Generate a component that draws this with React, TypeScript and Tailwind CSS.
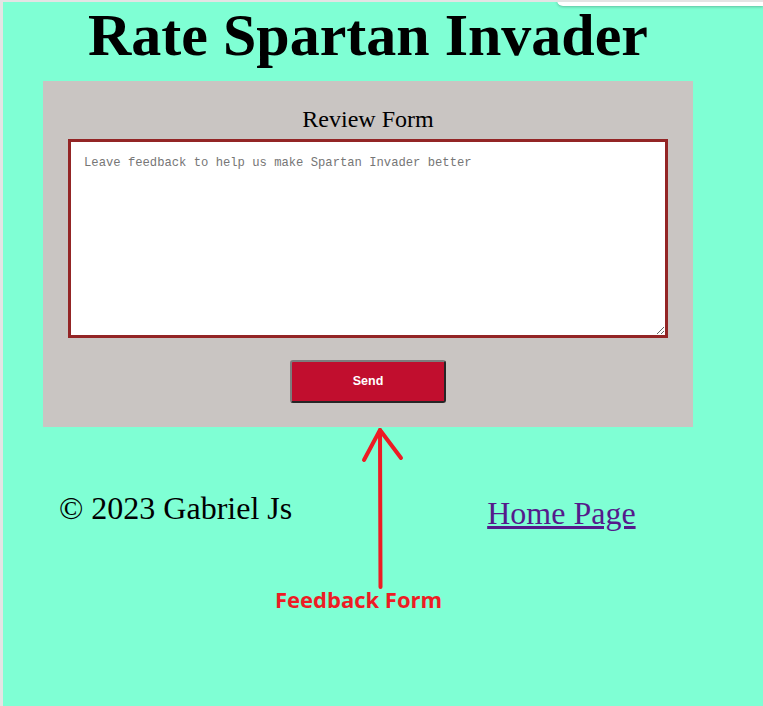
import React from "react";

export default function App() {
  return (
    <div className="relative w-[763px] h-[706px] overflow-hidden bg-[#7fffd4] border-l-[3px] border-t-2 border-[#e4e4e4]">
      <div className="absolute right-0 top-[-2px] w-[206px] h-[6px] bg-white rounded-bl-[6px] shadow-[0_1px_3px_rgba(0,0,0,0.25)]" />
      <div className="w-[730px]">
        <h1 className="text-center text-black font-bold text-[60px] leading-[66px] [font-family:'Liberation_Serif',serif]">
          Rate Spartan Invader
        </h1>
        <div className="mx-10 mt-[13px] h-[346px] bg-[#c9c5c2] flex flex-col items-center pt-[24px]">
          <h2 className="text-[24px] leading-[28px] text-black [font-family:'Liberation_Serif',serif]">
            Review Form
          </h2>
          <textarea
            className="mt-[6px] w-[600px] h-[199px] shrink-0 bg-white border-[3px] border-[#932525] pt-[13px] pb-[12px] pr-[12px] pl-[13px] text-[12.2px] leading-[16px] [font-family:'Liberation_Mono',monospace] placeholder:text-[#767676] outline-none"
            placeholder="Leave feedback to help us make Spartan Invader better"
          />
          <button className="mt-[22px] w-[156px] h-[43px] bg-[#c10e2e] rounded-[3px] border-2 border-t-[#7d7d7d] border-l-[#7d7d7d] border-r-[#262626] border-b-[#262626] text-white font-bold text-[12.5px] [font-family:'Liberation_Sans',sans-serif]">
            Send
          </button>
        </div>
        <div className="flex items-start mt-[63px] [font-family:'Liberation_Serif',serif] text-[32px] leading-[37px]">
          <p className="ml-[56px] text-black">© 2023 Gabriel Js</p>
          <a href="#" className="ml-[195px] mt-[5px] text-[#551a8b] underline">
            Home Page
          </a>
        </div>
      </div>
      <svg className="absolute left-[-3px] top-[-2px] pointer-events-none" width="763" height="706">
        <g stroke="#ed1c24" strokeWidth="4" strokeLinecap="round" fill="none">
          <line x1="380" y1="430" x2="380.5" y2="587" />
          <polyline points="364,460 380,430 401,458" strokeLinejoin="round" />
        </g>
      </svg>
      <div className="absolute left-[272px] top-[586px] text-[22px] leading-[22px] font-bold text-[#ed1c24] [font-family:'Open_Sans',sans-serif]">
        Feedback Form
      </div>
    </div>
  );
}
